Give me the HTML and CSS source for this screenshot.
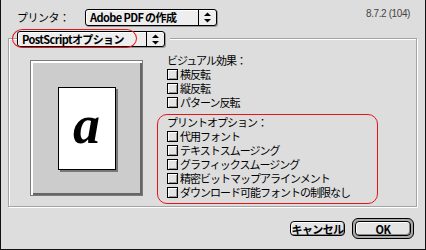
FILE: index.html
```html
<!DOCTYPE html>
<html lang="ja">
<head>
    <meta charset="UTF-8">
    <title>プリント</title>
    <link rel="stylesheet" href="styles.css">
</head>
<body>
    <div class="window">
        <div class="top">
            <span class="label">プリンタ：</span>
            <div class="popup popup-printer">
                <span class="popup-text">Adobe PDF の作成</span>
                <span class="popup-arrow">
                    <svg width="7" height="11" viewBox="0 0 7 11"><polygon points="0,4 3.5,0.5 7,4"/><polygon points="0,7 3.5,10.5 7,7"/></svg>
                </span>
            </div>
            <span class="version">8.7.2 (104)</span>
        </div>

        <div class="group">
            <div class="group-head">
                <div class="popup popup-pane">
                    <span class="popup-text">PostScriptオプション</span>
                    <span class="popup-arrow">
                        <svg width="7" height="11" viewBox="0 0 7 11"><polygon points="0,4 3.5,0.5 7,4"/><polygon points="0,7 3.5,10.5 7,7"/></svg>
                    </span>
                </div>
                <span class="mark-oval"></span>
            </div>

            <div class="group-body">
                <div class="preview">
                    <div class="page"><span class="glyph">a</span></div>
                </div>

                <div class="options">
                    <div class="section visual">
                        <div class="heading">ビジュアル効果：</div>
                        <div class="check"><span class="box"></span>横反転</div>
                        <div class="check"><span class="box"></span>縦反転</div>
                        <div class="check"><span class="box"></span>パターン反転</div>
                    </div>

                    <div class="section print">
                        <div class="heading">プリントオプション：</div>
                        <div class="check"><span class="box"></span>代用フォント</div>
                        <div class="check"><span class="box"></span>テキストスムージング</div>
                        <div class="check"><span class="box"></span>グラフィックスムージング</div>
                        <div class="check"><span class="box"></span>精密ビットマップアラインメント</div>
                        <div class="check"><span class="box"></span>ダウンロード可能フォントの制限なし</div>
                    </div>
                </div>
            </div>
        </div>

        <div class="buttons">
            <button class="btn">キャンセル</button>
            <span class="ring"><button class="btn">OK</button></span>
        </div>
    </div>
</body>
</html>
```

FILE: styles.css
```css
body {
    margin: 0;
    font-family: "Noto Sans CJK JP", sans-serif;
    font-size: 11px;
    color: #000;
    background-color: #dddddd;
}
.window {
    width: 426px;
    height: 250px;
    box-sizing: border-box;
    border: 1px solid #111;
    border-top: none;
    background-color: #dddddd;
}

/* top row */
.top {
    display: flex;
    align-items: flex-start;
    padding: 9px 15px 0 16px;
    height: 30px;
    box-sizing: border-box;
}
.label {
    width: 68px;
    line-height: 17px;
    letter-spacing: -0.5px;
}
.version {
    margin-left: auto;
    margin-top: -1px;
    font-family: "Liberation Sans", sans-serif;
    font-size: 10px;
    letter-spacing: -0.4px;
    color: #444;
}

/* popup menus */
.popup {
    display: flex;
    align-items: stretch;
    box-sizing: border-box;
    border: 1px solid #000;
    border-radius: 3px;
    background-color: #eeeeee;
    box-shadow: inset 1px 1px 0 #fff, 1px 1px 0 #999;
}
.popup-text {
    flex: 1;
    padding-left: 4px;
    font-weight: bold;
    letter-spacing: -0.6px;
    white-space: nowrap;
}
.popup-arrow {
    display: flex;
    align-items: center;
    justify-content: center;
    border-left: 1px solid #000;
    width: 17px;
}
.popup-printer {
    width: 132px;
    height: 17px;
    line-height: 15px;
}
.popup-pane {
    width: 148px;
    height: 16px;
    line-height: 14px;
}

/* group box */
.group {
    margin-left: 7px;
    margin-top: 8px;
    width: 409px;
    height: 169px;
    box-sizing: border-box;
    border: 1px solid #a4a4a4;
    box-shadow: inset 1px 1px 0 #fff, 1px 1px 0 #fff;
}
.group-head {
    position: relative;
    display: flex;
    width: max-content;
    margin: -8px 0 0 8px;
    padding-right: 5px;
    background-color: #dddddd;
}
.mark-oval {
    position: absolute;
    left: -5px;
    top: -2px;
    width: 125px;
    height: 19px;
    box-sizing: border-box;
    border: 1px solid #e8141a;
    border-radius: 11px / 10px;
}
.group-body {
    display: flex;
    align-items: flex-start;
    margin-top: 6px;
}

/* preview */
.preview {
    display: flex;
    align-items: center;
    justify-content: center;
    margin: 7px 0 0 21px;
    width: 113px;
    height: 136px;
    box-sizing: border-box;
    border: 1px solid #7a7a7a;
    background-color: #cccccc;
    box-shadow: inset 2px 2px 0 #fff, inset -2px -2px 0 #666;
}
.page {
    display: flex;
    align-items: center;
    justify-content: center;
    width: 58px;
    height: 83px;
    box-sizing: border-box;
    border: 1px solid #000;
    background-color: #fff;
    box-shadow: 2px 2px 0 #777;
}
.glyph {
    font-family: "Liberation Serif", serif;
    font-style: italic;
    font-weight: bold;
    font-size: 54px;
    line-height: 1;
    margin-top: -6px;
}

/* options */
.options {
    margin-left: 14px;
}
.section {
    letter-spacing: -1px;
}
.visual {
    padding-left: 10px;
}
.heading {
    line-height: 14px;
    white-space: nowrap;
}
.check {
    display: flex;
    align-items: center;
    height: 14px;
    line-height: 14px;
    white-space: nowrap;
}
.box {
    width: 11px;
    height: 11px;
    box-sizing: border-box;
    margin-right: 2px;
    border: 1px solid #000;
    background-color: #e4e4e4;
    box-shadow: inset 1px 1px 0 #fff, inset -1px -1px 0 #999;
}
.print {
    margin-top: 5px;
    width: 221px;
    height: 90px;
    box-sizing: border-box;
    padding: 1px 0 0 9px;
    border: 1px solid #e8141a;
    border-radius: 10px;
}
.print .heading {
    line-height: 13px;
}

/* buttons */
.buttons {
    display: flex;
    align-items: center;
    justify-content: flex-end;
    gap: 7px;
    margin-top: 11px;
    padding-right: 11px;
}
.btn {
    height: 15px;
    padding: 0;
    box-sizing: border-box;
    border: 1px solid #000;
    border-radius: 4px;
    background-color: #e4e4e4;
    box-shadow: inset 1px 1px 0 #fff, inset -1px -1px 0 #888;
    font-family: "Noto Sans CJK JP", sans-serif;
    font-size: 11px;
    font-weight: bold;
    line-height: 12px;
    letter-spacing: -0.6px;
    color: #000;
    width: 55px;
}
.ring {
    display: flex;
    padding: 2px;
    border: 1px solid #000;
    border-radius: 6px;
    background-color: #aaa;
}
.ring .btn {
    width: 56px;
}
```
